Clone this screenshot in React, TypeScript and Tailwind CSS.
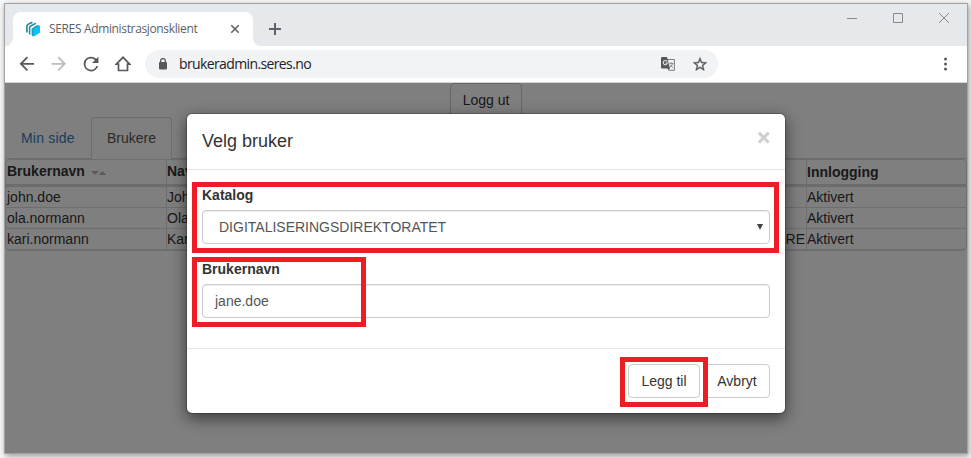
import React from "react";

const rows = [
  { user: "john.doe", name: "John", role: "" },
  { user: "ola.normann", name: "Ola", role: "" },
  { user: "kari.normann", name: "Kari", role: "RE" },
];

function Logo() {
  return (
    <svg className="mr-2 h-4 w-4 shrink-0" viewBox="0 0 16 16">
      <path d="M1.9 11.5V5.2Q1.9 4 3 3.4L7.4 1.2" fill="none" stroke="#2b7f94" strokeWidth="1.6" />
      <path d="M4.6 13.5V6.8Q4.6 5.6 5.7 5L10.8 2.2" fill="none" stroke="#2491ab" strokeWidth="1.6" />
      <path d="M6.6 7.4 12.4 3.9 14.8 4.8V11.6L8.6 15.6 6.6 14.6Z" fill="#1f9fc2" />
      <path d="M8.2 8.2 14.8 4.8V11.6L8.6 15.6Z" fill="#06c3fb" />
    </svg>
  );
}

function TabStrip() {
  return (
    <div className="flex h-[42px] shrink-0 items-end bg-[#e5e9ec] font-['Open_Sans','Noto_Sans',sans-serif]">
      <svg className="h-2 w-2" viewBox="0 0 8 8">
        <path d="M8 0V8H0A8 8 0 0 0 8 0Z" fill="#fff" />
      </svg>
      <div className="flex h-[34px] w-60 items-center rounded-t-lg bg-white pl-3 pr-2.5">
        <Logo />
        <span className="w-[170px] whitespace-nowrap text-[12px] leading-4 tracking-[-0.35px] text-[#5b5f64]">SERES Administrasjonsklient</span>
        <svg className="ml-[14px] h-4 w-4 shrink-0" viewBox="0 0 16 16">
          <path d="m4.3 4.3 7.4 7.4m0-7.4-7.4 7.4" stroke="#5f6368" strokeWidth="1.6" />
        </svg>
      </div>
      <svg className="h-2 w-2" viewBox="0 0 8 8">
        <path d="M0 0V8H8A8 8 0 0 1 0 0Z" fill="#fff" />
      </svg>
      <svg className="mb-[11px] ml-2 h-3 w-3" viewBox="0 0 12 12">
        <path d="M6 0v12M0 6h12" stroke="#5f6368" strokeWidth="2" />
      </svg>
      <div className="ml-auto flex items-center gap-9 self-start pr-[18px] pt-[9px]">
        <svg className="h-[10px] w-[10px]" viewBox="0 0 10 10"><path d="M0 5.5h10" stroke="#868a8e" /></svg>
        <svg className="h-[10px] w-[10px]" viewBox="0 0 10 10"><path d="M.5.5h9v9h-9z" fill="none" stroke="#868a8e" /></svg>
        <svg className="h-[10px] w-[10px]" viewBox="0 0 10 10"><path d="m0 0 10 10M10 0 0 10" stroke="#868a8e" /></svg>
      </div>
    </div>
  );
}

function Toolbar() {
  return (
    <div className="flex h-[37px] shrink-0 items-center border-b border-[#d4d4d4] bg-white pl-[14px] font-['Open_Sans','Noto_Sans',sans-serif]">
      <div className="flex gap-4">
        <svg className="h-4 w-4" viewBox="4 4 16 16"><path d="M20 11H7.83l5.59-5.59L12 4l-8 8 8 8 1.41-1.41L7.83 13H20z" fill="#55595e" transform="translate(1 1) scale(.9)" /></svg>
        <svg className="h-4 w-4" viewBox="4 4 16 16"><path d="m12 4-1.41 1.41L16.17 11H4v2h12.17l-5.58 5.59L12 20l8-8z" fill="#babcbe" transform="translate(1 1) scale(.9)" /></svg>
        <svg className="h-4 w-4" viewBox="4 4 16 16"><path d="M17.65 6.35A7.958 7.958 0 0 0 12 4a8 8 0 1 0 7.73 10h-2.08A6 6 0 1 1 12 6c1.66 0 3.14.69 4.22 1.78L13 11h7V4z" fill="#55595e" transform="translate(1 1) scale(.92)" /></svg>
        <svg className="h-4 w-4" viewBox="0 0 16 16"><path d="M3.5 14.5V8.2H1.2L8 1.3l6.8 6.9h-2.3v6.3z" fill="none" stroke="#55595e" strokeWidth="1.7" /></svg>
      </div>
      <div className="ml-[14px] flex h-7 w-[573px] items-center rounded-full bg-[#f1f3f4] pl-[13px] pr-[11px]">
        <svg className="h-3 w-[10px]" viewBox="0 0 10 12">
          <rect x="1" y="4" width="8" height="7.5" rx="1" fill="#55595e" />
          <path d="M2.6 5V3a2.4 2.4 0 0 1 4.8 0v2" fill="none" stroke="#55595e" strokeWidth="1.3" />
        </svg>
        <span className="ml-[11px] text-[14px] leading-5 tracking-[-0.62px] text-[#202124]">brukeradmin.seres.no</span>
        <svg className="ml-auto h-[14px] w-[14px]" viewBox="0 0 14 14">
          <path d="M6 2.5h7.4v10.8H7.8" fill="#f1f3f4" stroke="#777b80" />
          <path d="M0 1Q0 0 1 0h5l3 11.5H1q-1 0-1-1z" fill="#55595e" />
          <path d="M6 4.3A2.1 2.1 0 1 0 6.4 6H4.5" fill="none" stroke="#e3e5e7" strokeWidth="1.1" />
          <path d="M8.4 6.3h4M10.2 5.4v1M11.7 6.4c-.5 1.7-1.4 2.8-2.6 3.7M9.4 7.7l2.4 3" fill="none" stroke="#73777b" strokeWidth=".9" />
          <path d="M6.3 11H9l-1.5 2.4z" fill="#55595e" />
        </svg>
        <svg className="ml-[18px] h-[14px] w-[14px]" viewBox="2 2 20 19"><path d="m22 9.24-7.19-.62L12 2 9.19 8.63 2 9.24l5.46 4.73L5.82 21 12 17.27 18.18 21l-1.63-7.03zM12 15.4l-3.76 2.27 1-4.28-3.32-2.88 4.38-.38L12 6.1l1.71 4.04 4.38.38-3.32 2.88 1 4.28z" fill="#55595e" stroke="#55595e" strokeWidth=".5" /></svg>
      </div>
      <svg className="ml-auto mr-5 h-[14px] w-[3px]" viewBox="0 0 3 14">
        <circle cx="1.5" cy="2" r="1.5" fill="#55595e" />
        <circle cx="1.5" cy="7" r="1.5" fill="#55595e" />
        <circle cx="1.5" cy="12" r="1.5" fill="#55595e" />
      </svg>
    </div>
  );
}

function UserTable() {
  return (
    <div className="overflow-hidden rounded-[5px] border border-b-2 border-[#ddd]">
      <div className="grid h-[27px] grid-cols-[160px_640px_1fr] border-b-[3px] border-[#d8d8d8] font-bold leading-6">
        <div className="flex h-[22px] items-center pl-px">
          Brukernavn
          <svg className="ml-[6px] mt-[3px] h-1 w-[15px]" viewBox="0 0 15 4">
            <path d="M0 0h8L4 4zM7.5 4h8l-4-4z" fill="#b7b7b7" />
          </svg>
        </div>
        <div className="border-l border-[#ddd] leading-[22px]">Navn</div>
        <div className="border-l border-[#ddd]">Innlogging</div>
      </div>
      {rows.map((row, i) => (
        <div key={row.user} className={`grid grid-cols-[160px_640px_1fr] border-[#ddd] ${i < 2 ? "h-[21px] border-b" : "h-5"}`}>
          <div className="pl-px">{row.user}</div>
          <div className="flex justify-between border-l border-[#ddd] pr-px">
            <span>{row.name}</span>
            <span>{row.role}</span>
          </div>
          <div className="border-l border-[#ddd]">Aktivert</div>
        </div>
      ))}
    </div>
  );
}

function Dialog() {
  return (
    <div className="absolute left-[181px] top-[30px] w-[600px] rounded-md border border-black/20 bg-white bg-clip-padding shadow-[0_5px_15px_rgba(0,0,0,0.5)]">
      <div className="flex h-14 items-start justify-between border-b border-[#e5e5e5] p-[15px]">
        <h4 className="text-[18px] leading-[24px] text-[#333]">Velg bruker</h4>
        <span className="-mt-[2px] text-[22px] font-bold leading-[21px] text-black/20 [-webkit-text-stroke:0.5px_#ccc]">×</span>
      </div>
      <div className="relative p-[15px] pb-[30px]">
        <div className="font-bold">Katalog</div>
        <div className="mt-[5px] flex h-[34px] items-center justify-between rounded border border-[#ccc] pl-4 pr-[6px] text-[#555] shadow-[inset_0_1px_1px_rgba(0,0,0,0.075)]">
          <span>DIGITALISERINGSDIREKTORATET</span>
          <svg className="h-[6px] w-[6px]" viewBox="0 0 6 6"><path d="M0 0h6L3 6z" fill="#444" /></svg>
        </div>
        <div className="mt-[15px] font-bold">Brukernavn</div>
        <div className="mt-[5px] flex h-[34px] items-center rounded border border-[#ccc] px-3 text-[#555] shadow-[inset_0_1px_1px_rgba(0,0,0,0.075)]">jane.doe</div>
        <div className="absolute left-[5px] top-3 h-[71px] w-[587px] border-[5px] border-[#ee1c25]" />
        <div className="absolute left-[5px] top-[87px] h-[70px] w-[174px] border-[5px] border-[#ee1c25]" />
      </div>
      <div className="relative flex justify-end gap-1 border-t border-[#e5e5e5] p-[15px]">
        <button className="h-[34px] w-[72px] rounded border border-[#ccc] bg-white">Legg til</button>
        <button className="h-[34px] w-[66px] rounded border border-[#ccc] bg-white">Avbryt</button>
        <div className="absolute left-[433px] top-2 h-[50px] w-[88px] border-[5px] border-[#ee1c25]" />
      </div>
    </div>
  );
}

export default function App() {
  return (
    <div className="h-[458px] w-[971px] overflow-hidden bg-[#f8f8f8] pl-1 pt-[3px]">
      <div className="flex h-[451px] w-[964px] flex-col border border-[#a0a2a5] shadow-[1px_2px_6px_rgba(0,0,0,0.4)]">
        <TabStrip />
        <Toolbar />
        <div className="relative min-h-0 flex-1 overflow-hidden bg-white font-['Liberation_Sans',Arial,sans-serif] text-[14px] leading-5 text-[#333]">
          <div className="flex justify-center">
            <button className="h-[34px] w-[72px] rounded border border-[#ccc]">Logg ut</button>
          </div>
          <div className="flex h-[42px] border-b border-[#ddd]">
            <div className="w-[86px] pl-4 pt-[11px] tracking-[0.2px] text-[#337ab7]">Min side</div>
            <div className="h-[42px] w-[81px] rounded-t border border-b-0 border-[#ddd] bg-white pt-[10px] text-center text-[#555]">Brukere</div>
          </div>
          <UserTable />
          <div className="absolute inset-0 bg-black/50" />
          <Dialog />
        </div>
      </div>
    </div>
  );
}
